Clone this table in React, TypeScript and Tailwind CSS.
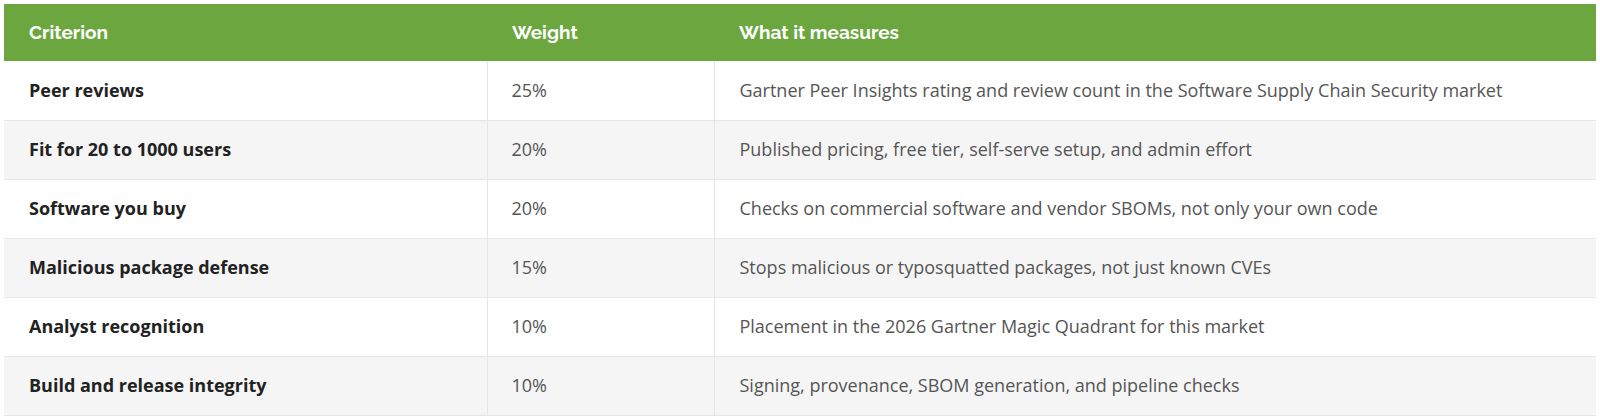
import React from "react";

const rows = [
  ["Peer reviews", "25%", "Gartner Peer Insights rating and review count in the Software Supply Chain Security market"],
  ["Fit for 20 to 1000 users", "20%", "Published pricing, free tier, self-serve setup, and admin effort"],
  ["Software you buy", "20%", "Checks on commercial software and vendor SBOMs, not only your own code"],
  ["Malicious package defense", "15%", "Stops malicious or typosquatted packages, not just known CVEs"],
  ["Analyst recognition", "10%", "Placement in the 2026 Gartner Magic Quadrant for this market"],
  ["Build and release integrity", "10%", "Signing, provenance, SBOM generation, and pipeline checks"],
];

export default function App() {
  return (
    <div className="bg-white p-[4px] w-[1600px] h-[419px]" style={{ fontFamily: '"Open Sans", sans-serif' }}>
      <table className="w-full table-fixed border-collapse">
        <colgroup>
          <col className="w-[483px]" />
          <col className="w-[227px]" />
          <col />
        </colgroup>
        <thead>
          <tr className="bg-[#6ba63f] h-[57px]">
            {["Criterion", "Weight", "What it measures"].map((h) => (
              <th
                key={h}
                className="text-left align-middle pl-[25px] text-white font-bold text-[19px] font-['Raleway','Lato',sans-serif]"
              >
                {h}
              </th>
            ))}
          </tr>
        </thead>
        <tbody>
          {rows.map((r, i) => (
            <tr
              key={i}
              className={`h-[59px] border-b border-[#e6e6e6] ${i % 2 === 1 ? "bg-[#f5f5f5]" : "bg-white"}`}
            >
              <td className="pl-[25px] align-middle text-[18px] font-bold text-[#222222] border-r border-[#e6e6e6]">
                {r[0]}
              </td>
              <td className="pl-[24px] align-middle text-[18px] text-[#555555] border-r border-[#e6e6e6]">
                {r[1]}
              </td>
              <td className="pl-[25px] align-middle text-[18px] text-[#555555]">{r[2]}</td>
            </tr>
          ))}
        </tbody>
      </table>
    </div>
  );
}
